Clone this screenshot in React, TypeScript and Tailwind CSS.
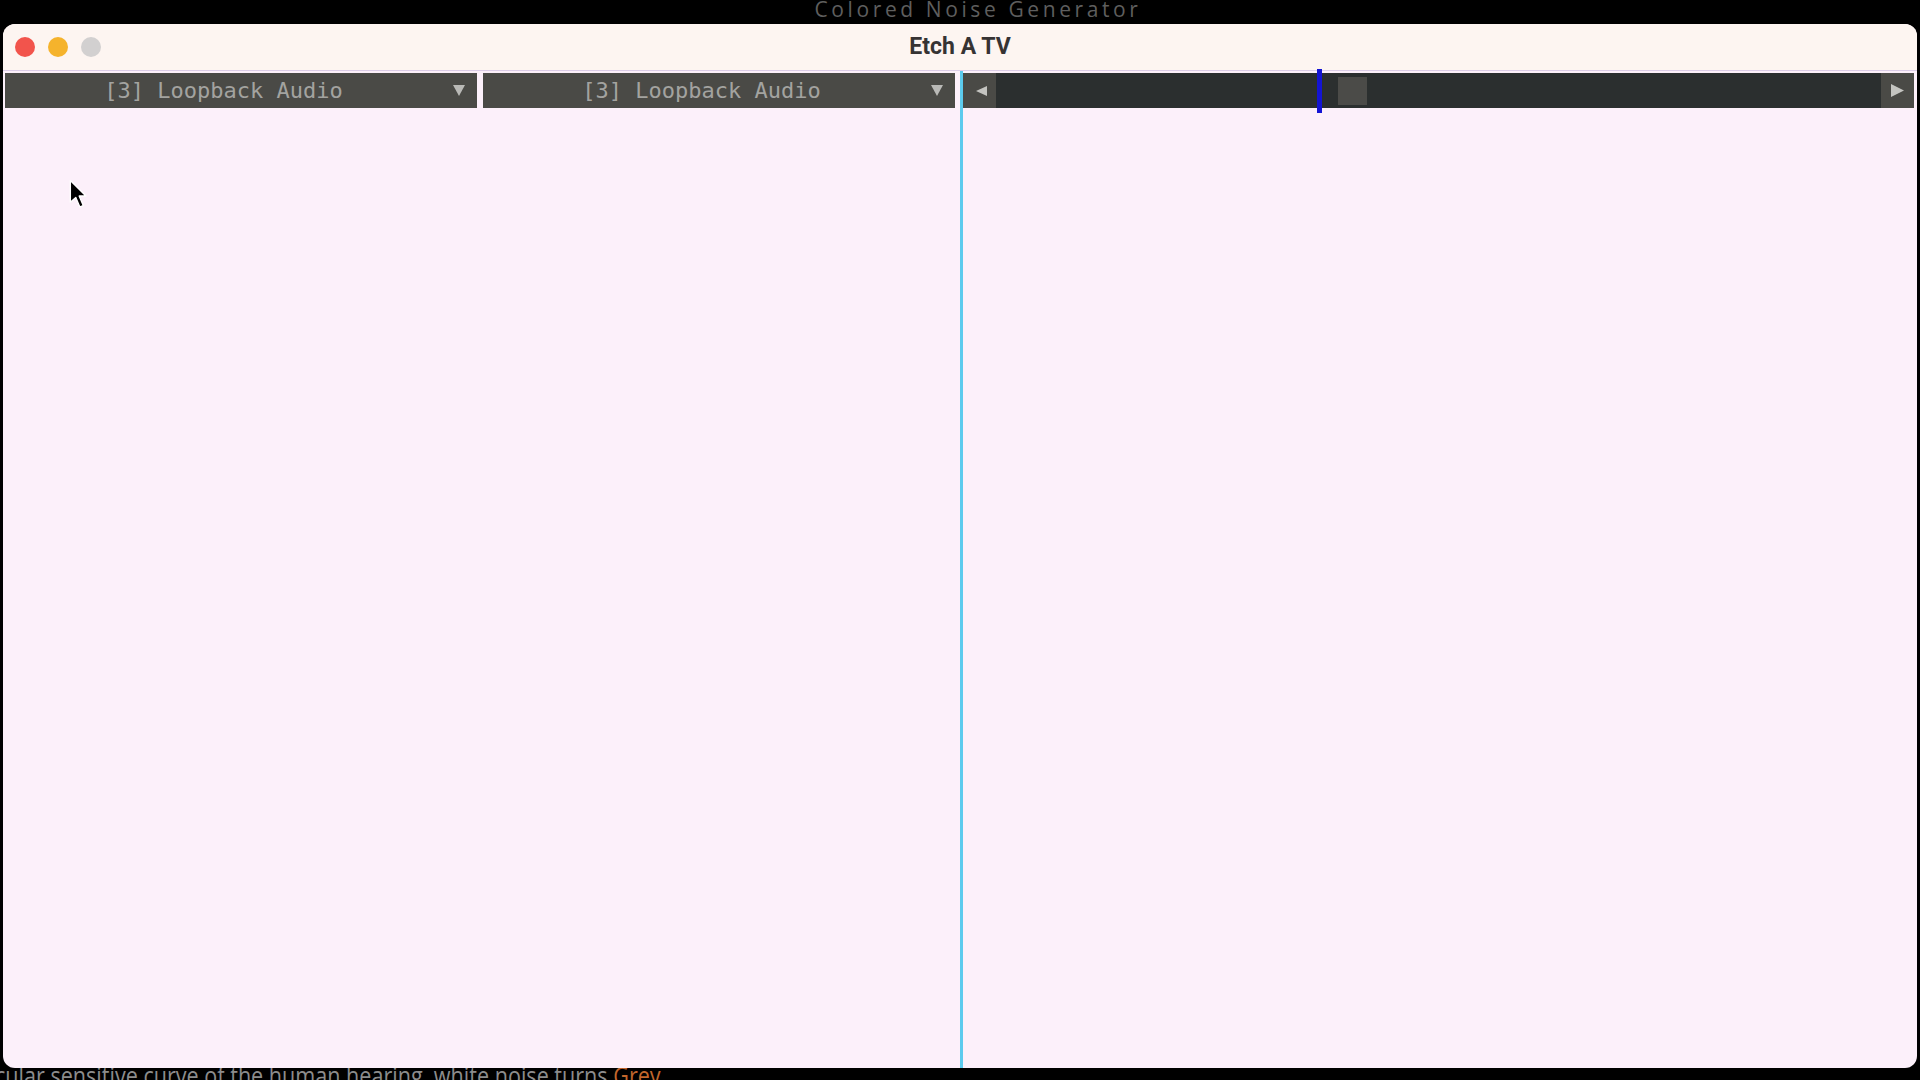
import React from "react";

function Dropdown() {
  return (
    <div className="w-[472px] h-[35px] bg-[#4a4a46] flex items-center">
      <div
        className="flex-1 text-center text-[22px] leading-none text-[#a3a3a0]"
        style={{ fontFamily: '"DejaVu Sans Mono", monospace' }}
      >
        [3] Loopback Audio
      </div>
      <div className="w-[35px] h-full flex items-center justify-end pr-[12px]">
        <svg width="12" height="11" viewBox="0 0 12 11">
          <polygon points="0,0 12,0 6,11" fill="#b9b9b6" />
        </svg>
      </div>
    </div>
  );
}

export default function App() {
  return (
    <div className="w-[1920px] h-[1080px] bg-black overflow-hidden flex flex-col relative">
      {/* desktop header text */}
      <div className="h-[24px] flex justify-center pl-[36px]">
        <div
          className="text-[21px] leading-[18px] tracking-[3.6px] text-[#5e5e5e]"
          style={{ fontFamily: '"Open Sans", sans-serif' }}
        >
          Colored Noise Generator
        </div>
      </div>

      {/* window */}
      <div className="ml-[3px] w-[1914px] h-[1044px] rounded-[12px] overflow-hidden flex flex-col bg-[#fcf0fa] relative z-10">
        {/* title bar */}
        <div className="h-[46px] bg-[#fdf5f1] grid grid-cols-[1fr_auto_1fr] items-center">
          <div className="flex items-center gap-[13px] pl-[12px]">
            <div className="w-[20px] h-[20px] rounded-full bg-[#f2544c]" />
            <div className="w-[20px] h-[20px] rounded-full bg-[#f5b32c]" />
            <div className="w-[20px] h-[20px] rounded-full bg-[#d2d0d0]" />
          </div>
          <div
            className="text-[23px] font-bold text-[#363333] pt-[1px]"
            style={{ fontFamily: 'Roboto, "Liberation Sans", sans-serif' }}
          >
            Etch A TV
          </div>
          <div />
        </div>

        {/* body */}
        <div className="flex-1 flex border-t border-[#dccde8]">
          <div className="w-[957px] flex items-start gap-[6px] pl-[2px] pt-[2px]">
            <Dropdown />
            <Dropdown />
          </div>
          <div className="w-[3px] bg-[#5ccbee]" />
          <div className="flex-1 pt-[2px] pr-[3px]">
            <div className="h-[35px] flex">
              <div className="w-[33px] h-full bg-[#4a4a46] flex items-center justify-start pl-[13px]">
                <svg width="11" height="10" viewBox="0 0 11 10">
                  <polygon points="11,0 11,10 0,5" fill="#c4c4c0" />
                </svg>
              </div>
              <div className="flex-1 h-full bg-[#2b2f2f] relative">
                <div className="absolute left-[342px] top-[4px] w-[29px] h-[28px] bg-[#4b4b48]" />
                <div className="absolute left-[321px] top-[-4px] w-[5px] h-[44px] bg-[#1414d4]" />
              </div>
              <div className="w-[33px] h-full bg-[#4a4a46] flex items-center justify-center">
                <svg width="13" height="13" viewBox="0 0 13 13">
                  <polygon points="0,0 13,6.5 0,13" fill="#c4c4c0" />
                </svg>
              </div>
            </div>
          </div>
        </div>

        {/* mouse cursor */}
        <svg
          className="absolute left-[66px] top-[155px]"
          width="19"
          height="30"
          viewBox="0 0 14 22"
        >
          <path
            d="M1,1 L1,17 L5,13.5 L8,20.5 L10.5,19.5 L7.5,12.5 L12.5,12.5 Z"
            fill="#000"
            stroke="#fff"
            strokeWidth="1"
            strokeLinejoin="round"
          />
        </svg>
      </div>

      {/* desktop text peeking under the window */}
      <div className="h-[12px] overflow-hidden">
        <div
          className="ml-[-5px] whitespace-nowrap text-[26px] leading-[14px] text-[#8c8c8c] origin-left scale-x-[0.83]"
          style={{ fontFamily: '"Open Sans", sans-serif' }}
        >
          cular sensitive curve of the human hearing, white noise turns{" "}
          <span className="text-[#c2662c]">Grey</span>.
        </div>
      </div>
    </div>
  );
}
